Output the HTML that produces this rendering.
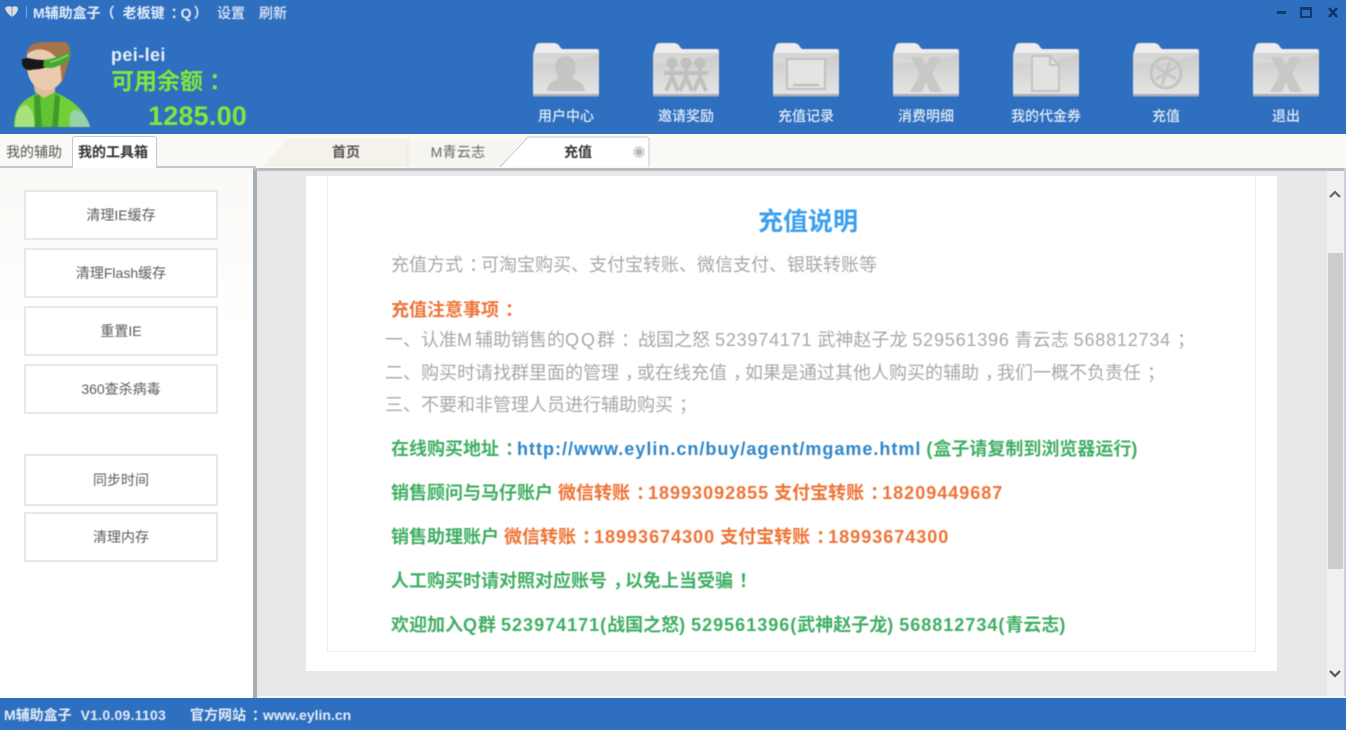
<!DOCTYPE html>
<html lang="zh"><head><meta charset="utf-8"><title>M辅助盒子</title>
<style>
*{box-sizing:border-box;margin:0;padding:0}
html,body{width:1346px;height:730px;overflow:hidden;background:#fbf9f6}
body{position:relative;font-family:"Liberation Sans","Noto Sans CJK SC",sans-serif}
.a{position:absolute}
.t{position:absolute;white-space:nowrap;line-height:1;filter:blur(.45px)}
.c{text-align:center;transform:translateX(-50%)}
.w{color:#e4ecf7;font-size:14px;font-weight:500}
.wb{font-weight:700}
.btn{position:absolute;left:24px;width:194px;background:#fff;border:2px solid #e8e8e8;color:#5c5c5c;font-size:14px;text-align:center;white-space:nowrap}
.btn span{filter:blur(.45px);display:block}
.g{color:#a8a8a8;font-size:18px}
.b{font-size:18px;font-weight:700;color:#3fae62}
.o{color:#ee7336}
.l{letter-spacing:1px}
.m{letter-spacing:.8px}
.p{display:inline-block;transform:translateX(6px);font-style:normal}
.f{position:absolute;top:43px;width:68px;height:54px;filter:blur(.5px)}
</style></head><body>
<div class="a" style="left:0;top:0;width:1346px;height:134px;background:#2e6fc0"></div>

<svg class="a" style="left:3px;top:4px" width="18" height="16" viewBox="0 0 18 16"><path d="M2 4 Q5 1 9 3 Q13 1 15 4 Q15 9 9 13 Q3 9 2 4Z" fill="#d8dde2"/><path d="M9 3V13" stroke="#8aa0b8"/></svg>
<div class="a" style="left:26px;top:6px;width:1px;height:12px;background:#7fa8da"></div>
<div class="t w wb" style="left:33px;top:6px">M辅助盒子（<span style="margin-left:8px">老板键</span><i class="p">：</i><span style="margin:0 2px">Q</span>）</div>
<div class="t w" style="left:217px;top:6px">设置</div>
<div class="t w" style="left:259px;top:6px">刷新</div>

<div class="a" style="left:1277px;top:11px;width:9px;height:3px;background:#123c70"></div>
<div class="a" style="left:1300px;top:7px;width:12px;height:11px;border:2px solid #123c70;border-top-width:3px"></div>
<svg class="a" style="left:1327px;top:7px" width="12" height="11" viewBox="0 0 12 11"><path d="M2 1L10 10M10 1L2 10" stroke="#0f2f5c" stroke-width="2.4"/></svg>

<!-- avatar -->
<svg class="a" style="left:0;top:30px;filter:blur(.6px)" width="110" height="105" viewBox="0 30 110 105">
<path d="M14 127 C14 108 22 100 36 94 L54 92 C70 98 86 110 90 127Z" fill="#72cf36"/>
<path d="M15 127 C15 112 20 104 27 105 C34 110 35 122 34 127Z" fill="#a8e27a"/>
<path d="M70 127 C68 116 71 108 78 110 C85 114 89 122 90 127Z" fill="#95d2a5"/>
<path d="M35 127 L34 96 L40 94 L42 127Z M52 127 L55 94 L60 96 L58 127Z" fill="#3f9c2a"/>
<path d="M42 127 L40 90 L55 90 L52 127Z" fill="#62c432"/>
<path d="M33 82 L55 82 L55 92 L44 98 L35 92Z" fill="#e2bd9c"/>
<path d="M27 54 C27 46 34 43 44 43 C56 43 66 48 66 60 L62 80 C58 88 50 91 43 90 C34 88 28 80 27 68Z" fill="#ebcbb0"/>
<path d="M27 54 C27 46 34 42 44 42 L66 42 C71 46 72 56 68 64 L62 84 L60 62 C50 48 38 46 27 54Z" fill="#a5734a"/>
<path d="M22 59 L28 58 C36 60 42 60 46 60 L46 67 C40 70 34 69 31 70 C27 71 23 68 22 64Z" fill="#181818"/>
<path d="M44 60 C52 59 62 56 69 52 L71 56 C66 63 56 69 47 68 L43 66Z" fill="#45a836"/>
<path d="M50 62 C56 61 62 58 68 55" stroke="#8be05a" stroke-width="1.5" fill="none"/>
</svg>

<div class="t" style="left:111px;top:46px;font-size:18px;font-weight:700;color:#e6eef8;letter-spacing:.4px">pei-lei</div>
<div class="t" style="left:111px;top:70px;font-size:23px;font-weight:700;color:#7fe83c">可用余额<i class="p">：</i></div>
<div class="t" style="left:148px;top:103px;font-size:27px;font-weight:700;color:#7fe83c;letter-spacing:.2px">1285.00</div>

<!-- folders -->
<svg width="0" height="0" style="position:absolute"><defs>
<linearGradient id="fg" x1="0" y1="0" x2="0" y2="1"><stop offset="0" stop-color="#cbcbcb"/><stop offset=".55" stop-color="#d9d9d9"/><stop offset="1" stop-color="#e8e6e4"/></linearGradient>
<symbol id="folder" viewBox="0 0 68 54">
<path d="M1 12 L4 2 Q5 0 9 0 L22 0 Q26 0 28 4 L30 6 L65 6 Q67 6 67 9 L67 12Z" fill="#eeedeb"/>
<rect x="1" y="10" width="66" height="43" fill="url(#fg)"/>
<rect x="1" y="51" width="66" height="2.5" fill="#a6b0bc"/>
<path d="M1 10 H67 V12 L30 20 L1 20Z" fill="#fff" opacity=".18"/>
</symbol></defs></svg>

<svg class="f" style="left:532px"><use href="#folder"/><path d="M15 48 C16 38 24 38 27 35 C23 30 22 22 25 17 C29 12 39 12 42 17 C45 22 44 30 40 35 C44 38 52 38 53 48Z" fill="#c4c4c4"/></svg>
<svg class="f" style="left:652px"><use href="#folder"/><g fill="none" stroke="#c0c0c0" stroke-width="4"><circle cx="20" cy="20" r="3.5" fill="#c0c0c0"/><circle cx="34" cy="20" r="3.5" fill="#c0c0c0"/><circle cx="48" cy="20" r="3.5" fill="#c0c0c0"/><path d="M12 30H56M20 24V34L14 48M20 34L26 48M34 24V34L28 48M34 34L40 48M48 24V34L42 48M48 34L54 48"/></g></svg>
<svg class="f" style="left:772px"><use href="#folder"/><rect x="15" y="16" width="38" height="30" fill="#e4e4e4" stroke="#c0c0c0" stroke-width="2"/><rect x="21" y="41" width="26" height="2" fill="#b8b8b8"/></svg>
<svg class="f" style="left:892px"><use href="#folder"/><path d="M19 14H30L34 23L38 14H49L40 31L50 49H38L34 39L30 49H18L28 31Z" fill="#c8c8c8"/></svg>
<svg class="f" style="left:1012px"><use href="#folder"/><path d="M20 13H38L47 22V48H20Z" fill="#e2e2e2" stroke="#c4c4c4" stroke-width="2"/><path d="M38 13V22H47" fill="none" stroke="#c4c4c4" stroke-width="2"/></svg>
<svg class="f" style="left:1132px"><use href="#folder"/><circle cx="34" cy="30" r="15" fill="none" stroke="#c4c4c4" stroke-width="3"/><path d="M38 18L30 42M24 24L44 36M44 24L24 36" stroke="#c4c4c4" stroke-width="2.5"/></svg>
<svg class="f" style="left:1252px"><use href="#folder"/><path d="M19 14H30L34 23L38 14H49L40 31L50 49H38L34 39L30 49H18L28 31Z" fill="#c8c8c8"/></svg>

<div class="t w c" style="left:566px;top:109px">用户中心</div>
<div class="t w c" style="left:686px;top:109px">邀请奖励</div>
<div class="t w c" style="left:806px;top:109px">充值记录</div>
<div class="t w c" style="left:926px;top:109px">消费明细</div>
<div class="t w c" style="left:1046px;top:109px">我的代金券</div>
<div class="t w c" style="left:1166px;top:109px">充值</div>
<div class="t w c" style="left:1286px;top:109px">退出</div>

<!-- tab band -->
<div class="a" style="left:0;top:166px;width:256px;height:2px;background:#c3c9d2"></div>
<div class="a" style="left:72px;top:136px;width:85px;height:32px;background:#fff;border:1px solid #c3c9d2;border-bottom:0;border-radius:3px 3px 0 0"></div>
<div class="t" style="left:6px;top:145px;font-size:14px;color:#555">我的辅助</div>
<div class="t" style="left:78px;top:145px;font-size:14px;font-weight:700;color:#333">我的工具箱</div>

<svg class="a" style="left:260px;top:135px" width="400" height="33" viewBox="0 0 400 33">
<path d="M2 32 L28 4 H148 V32Z" fill="#f5f2ec"/>
<path d="M148 4 H262 L240 32 H148Z" fill="#f7f5f0"/>
<path d="M148 4V32" stroke="#e8e6e0"/>
<path d="M240 32 L268 2 H386 Q389 2 389 5 V32" fill="#fff" stroke="#c3c9d2"/>
</svg>
<div class="t c" style="left:346px;top:145px;font-size:14px;font-weight:700;color:#555">首页</div>
<div class="t c" style="left:458px;top:145px;font-size:14px;color:#666;letter-spacing:.3px">M青云志</div>
<div class="t c" style="left:578px;top:145px;font-size:14px;font-weight:700;color:#333">充值</div>
<div class="a" style="left:633px;top:146px;width:12px;height:12px;border-radius:50%;background:#b5b5b5;border:3px solid #ddd"></div>

<!-- sidebar -->
<div class="a" style="left:0;top:168px;width:253px;height:530px;background:linear-gradient(#fbf9f6,#fff 30%)"></div>
<div class="btn" style="top:190px;height:50px;line-height:47px"><span>清理IE缓存</span></div>
<div class="btn" style="top:248px;height:50px;line-height:47px"><span>清理Flash缓存</span></div>
<div class="btn" style="top:306px;height:50px;line-height:47px"><span>重置IE</span></div>
<div class="btn" style="top:364px;height:50px;line-height:47px"><span>360查杀病毒</span></div>
<div class="btn" style="top:454px;height:52px;line-height:49px"><span>同步时间</span></div>
<div class="btn" style="top:512px;height:50px;line-height:47px"><span>清理内存</span></div>

<!-- content -->
<div class="a" style="left:253px;top:168px;width:4px;height:530px;background:#a7adb5"></div>
<div class="a" style="left:257px;top:168px;width:1089px;height:530px;background:#e8e8e8"></div>
<div class="a" style="left:253px;top:168px;width:1093px;height:3px;background:#b8bcc2"></div>
<div class="a" style="left:306px;top:176px;width:971px;height:495px;background:#fff"></div>
<div class="a" style="left:327px;top:176px;width:929px;height:476px;border:1px solid #efefef;border-top:0"></div>
<div class="a" style="left:1327px;top:171px;width:17px;height:527px;background:#f0f0f0"></div>
<div class="a" style="left:1328px;top:253px;width:15px;height:316px;background:#cdcdcd"></div>
<div class="a" style="left:1344px;top:168px;width:2px;height:530px;background:#c9d3e2"></div>
<div class="a" style="left:257px;top:696px;width:1089px;height:2px;background:#f6f6f6"></div>
<svg class="a" style="left:1328px;top:188px" width="14" height="12" viewBox="0 0 14 12"><path d="M2 9L7 4L12 9" fill="none" stroke="#666" stroke-width="2.2"/></svg>
<svg class="a" style="left:1328px;top:668px" width="14" height="12" viewBox="0 0 14 12"><path d="M2 3L7 8L12 3" fill="none" stroke="#555" stroke-width="2.2"/></svg>

<div class="t c" style="left:808px;top:210px;font-size:25px;font-weight:700;color:#3b9fee">充值说明</div>
<div class="t g" style="left:391px;top:256px">充值方式<i class="p">：</i>可淘宝购买、支付宝转账、微信支付、银联转账等</div>
<div class="t b o" style="left:391px;top:301px">充值注意事项<i class="p">：</i></div>
<div class="t g" style="left:385px;top:331px">一、认准<span style="letter-spacing:3px">M</span>辅助销售的<span style="letter-spacing:2px">QQ</span>群<i class="p">：</i> 战国之怒 <span class="m">523974171</span> 武神赵子龙 <span class="m">529561396</span> 青云志 <span class="m">568812734</span><i class="p">；</i></div>
<div class="t g" style="left:385px;top:364px">二、购买时请找群里面的管理<i class="p">，</i>或在线充值<i class="p">，</i>如果是通过其他人购买的辅助<i class="p">，</i>我们一概不负责任<i class="p">；</i></div>
<div class="t g" style="left:385px;top:396px">三、不要和非管理人员进行辅助购买<i class="p">；</i></div>
<div class="t b" style="left:391px;top:440px">在线购买地址<i class="p">：</i><span class="l" style="color:#2f86c8">http://www.eylin.cn/buy/agent/mgame.html</span> <span class="l">(</span>盒子请复制到浏览器运行<span class="l">)</span></div>
<div class="t b" style="left:391px;top:484px">销售顾问与马仔账户 <span class="o">微信转账<i class="p">：</i><span class="l">18993092855</span> 支付宝转账<i class="p">：</i><span class="l">18209449687</span></span></div>
<div class="t b" style="left:391px;top:528px">销售助理账户 <span class="o">微信转账<i class="p">：</i><span class="l">18993674300</span> 支付宝转账<i class="p">：</i><span class="l">18993674300</span></span></div>
<div class="t b" style="left:391px;top:572px">人工购买时请对照对应账号<i class="p">，</i>以免上当受骗<i class="p">！</i></div>
<div class="t b" style="left:391px;top:616px">欢迎加入<span class="l">Q</span>群 <span class="l">523974171(</span>战国之怒<span class="l">)</span> <span class="l">529561396(</span>武神赵子龙<span class="l">)</span> <span class="l">568812734(</span>青云志<span class="l">)</span></div>

<!-- status -->
<div class="a" style="left:0;top:698px;width:1346px;height:32px;background:#2e6fc0"></div>
<div class="t w wb" style="left:4px;top:708px">M辅助盒子 <span style="margin-left:5px;letter-spacing:.25px">V1.0.09.1103</span></div>
<div class="t w wb" style="left:190px;top:708px">官方网站<i class="p">：</i><span style="margin-left:3px">www.eylin.cn</span></div>
</body></html>
